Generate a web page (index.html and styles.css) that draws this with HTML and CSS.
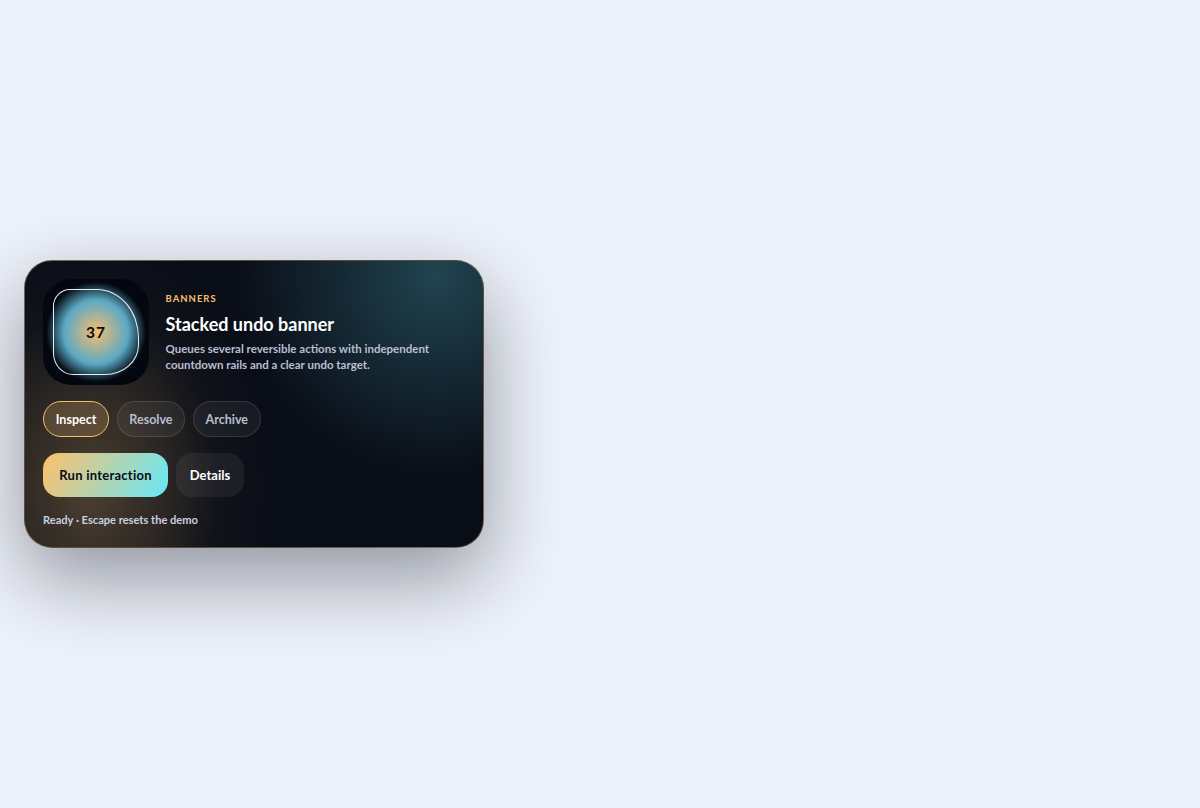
FILE: index.html
```html
<!DOCTYPE html>
<html lang="en">
	<head>
		<meta charset="UTF-8" />
		<title>Stacked undo banner</title>
		<link rel="stylesheet" href="styles.css">
	</head>
	<body>
		<div class="card">
			<div class="top">
				<div class="dial">
					<div class="blob"></div>
					<span class="num">37</span>
				</div>
				<div class="info">
					<div class="eyebrow">BANNERS</div>
					<h1>Stacked undo banner</h1>
					<p>Queues several reversible actions with independent countdown rails and a clear undo target.</p>
				</div>
			</div>
			<div class="tabs">
				<button class="tab active">Inspect</button>
				<button class="tab">Resolve</button>
				<button class="tab">Archive</button>
			</div>
			<div class="actions">
				<button class="run">Run interaction</button>
				<button class="details">Details</button>
			</div>
			<div class="status">Ready · Escape resets the demo</div>
		</div>
	</body>
</html>
```

FILE: styles.css
```css
* {
	box-sizing: border-box;
}
html, body {
	height: 100%;
}
body {
	margin: 0;
	padding: 24px;
	display: flex;
	align-items: center;
	background: #edf1f9;
	font-family: Lato, sans-serif;
}
.card {
	width: 460px;
	height: 288px;
	padding: 18px;
	border-radius: 28px;
	border: 1px solid rgba(255, 196, 120, 0.35);
	background:
		radial-gradient(circle at 90% 5%, rgba(103, 232, 249, 0.25), transparent 41%),
		radial-gradient(ellipse 185px 260px at 65px 228px, rgba(245, 190, 110, 0.28) 0, rgba(245, 190, 110, 0.14) 42%, rgba(245, 190, 110, 0.03) 70%, transparent 100%),
		#090d17;
	box-shadow: 0 30px 80px rgba(7, 11, 20, 0.4);
	color: #fff;
}
.top {
	display: flex;
	gap: 16px;
	align-items: center;
}
.dial {
	position: relative;
	flex: none;
	width: 106px;
	height: 106px;
	border-radius: 28px;
	background: radial-gradient(circle, #f5be6e 0, #5ba9c4 32px, #03070f 50px);
	display: flex;
	align-items: center;
	justify-content: center;
}
.blob {
	position: absolute;
	left: 10px;
	top: 10px;
	width: 86px;
	height: 86px;
	border: 1px solid #e6edf5;
	border-radius: 17px 42px 34px 20px / 17px 49px 30px 22px;
}
.num {
	font-size: 15.5px;
	font-weight: 700;
	color: #070b14;
	letter-spacing: 1px;
}
.info {
	flex: 1;
	padding-left: 0.5px;
}
.eyebrow {
	margin-top: 1px;
	font-size: 9.5px;
	font-weight: 700;
	letter-spacing: 1px;
	color: #f5be6e;
}
h1 {
	margin: 9px 0 6px;
	font-size: 18px;
	line-height: 22px;
	font-weight: 700;
}
p {
	margin: 0;
	font-size: 11.5px;
	line-height: 16px;
	font-weight: 700;
	color: #b8bfd0;
}
.tabs {
	display: flex;
	gap: 7.5px;
	margin-top: 16px;
}
.tab {
	height: 36px;
	padding: 0 11.75px;
	border-radius: 18px;
	border: 1px solid rgba(255, 255, 255, 0.12);
	background: rgba(255, 255, 255, 0.05);
	color: #b8bfd0;
	font: 700 12.5px Lato, sans-serif;
}
.tab.active {
	border-color: #f5be6e;
	background: rgba(245, 190, 110, 0.2);
	color: #fff;
}
.actions {
	display: flex;
	gap: 8px;
	margin-top: 16px;
}
.run, .details {
	height: 44px;
	border: none;
	border-radius: 16px;
	font: 700 13px Lato, sans-serif;
}
.run {
	width: 125px;
	background: linear-gradient(120deg, #ffc06a, #67e8f9);
	color: #070b14;
	letter-spacing: 0.25px;
}
.details {
	width: 68px;
	background: rgba(255, 255, 255, 0.06);
	color: #fff;
}
.status {
	margin-top: 16px;
	font-size: 11.1px;
	font-weight: 700;
	color: #c8d0e0;
}
```
